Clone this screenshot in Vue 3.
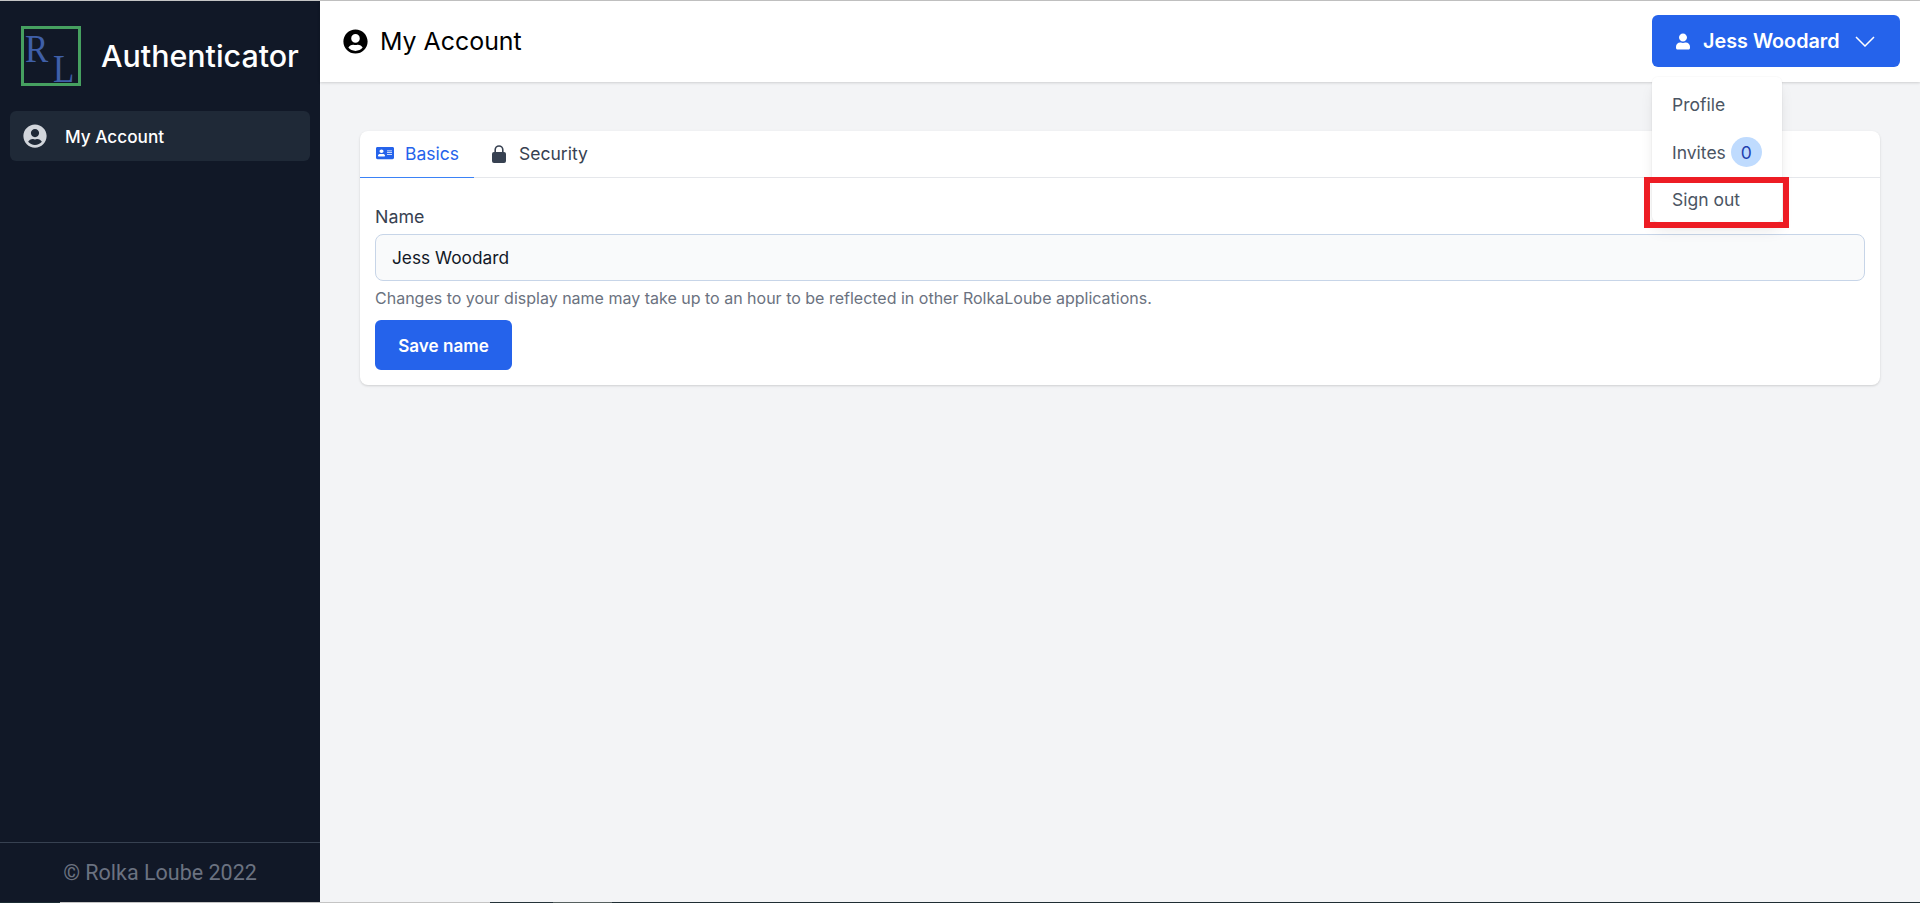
<script setup>
const helpText = 'Changes to your display name may take up to an hour to be reflected in other RolkaLoube applications.'
</script>

<template>
  <div class="page">
    <div class="shell">
      <aside class="sidebar">
        <div class="brand">
          <div class="logo">
            <span class="logo-r">R</span>
            <span class="logo-l">L</span>
          </div>
          <span class="brand-name">Authenticator</span>
        </div>
        <nav class="nav">
          <a class="nav-item">
            <svg class="nav-icon" viewBox="0 0 512 512"><path fill="currentColor" d="M256 8C119 8 8 119 8 256s111 248 248 248 248-111 248-248S393 8 256 8zm0 96c48.600 0 88 39.400 88 88s-39.400 88-88 88-88-39.400-88-88 39.400-88 88-88zm0 344c-58.700 0-111.300-26.600-146.500-68.200 18.800-35.400 55.600-59.800 98.500-59.800 2.400 0 4.800.4 7.100 1.100 13 4.200 26.600 6.900 40.900 6.900 14.300 0 28-2.700 40.900-6.900 2.300-.7 4.700-1.100 7.100-1.100 42.900 0 79.700 24.400 98.500 59.800C367.300 421.400 314.700 448 256 448z"/></svg>
            <span>My Account</span>
          </a>
        </nav>
        <div class="copyright">© Rolka Loube 2022</div>
      </aside>
      <div class="main">
        <header class="topbar">
          <div class="title">
            <svg class="title-icon" viewBox="0 0 512 512"><path fill="currentColor" d="M256 8C119 8 8 119 8 256s111 248 248 248 248-111 248-248S393 8 256 8zm0 96c48.600 0 88 39.400 88 88s-39.400 88-88 88-88-39.400-88-88 39.400-88 88-88zm0 344c-58.700 0-111.300-26.600-146.500-68.200 18.800-35.400 55.600-59.800 98.500-59.800 2.400 0 4.800.4 7.100 1.100 13 4.200 26.600 6.900 40.900 6.900 14.300 0 28-2.700 40.900-6.900 2.300-.7 4.700-1.100 7.100-1.100 42.900 0 79.700 24.400 98.500 59.800C367.300 421.400 314.700 448 256 448z"/></svg>
            <h1>My Account</h1>
          </div>
          <div class="user">
            <button class="user-btn">
              <svg class="user-icon" viewBox="0 0 448 512"><path fill="currentColor" d="M224 256c70.700 0 128-57.300 128-128S294.700 0 224 0 96 57.300 96 128s57.300 128 128 128zm89.600 32h-16.700c-22.200 10.200-46.900 16-72.900 16s-50.600-5.800-72.900-16h-16.700C60.200 288 0 348.200 0 422.400V464c0 26.500 21.500 48 48 48h352c26.500 0 48-21.500 48-48v-41.600c0-74.200-60.200-134.400-134.400-134.400z"/></svg>
              <span>Jess Woodard</span>
              <svg class="chev" viewBox="0 0 20 11"><path d="M1 1l9 9 9-9" fill="none" stroke="currentColor" stroke-width="1.500"/></svg>
            </button>
            <div class="menu">
              <a class="menu-item">Profile</a>
              <a class="menu-item invites">Invites <span class="badge">0</span></a>
              <a class="menu-item signout">Sign out</a>
              <span class="highlight"></span>
            </div>
          </div>
        </header>
        <main class="content">
          <section class="card">
            <div class="tabs">
              <a class="tab active">
                <svg class="tab-icon" viewBox="0 0 576 512" preserveAspectRatio="none"><path fill="currentColor" d="M528 32H48C21.500 32 0 53.500 0 80v352c0 26.500 21.500 48 48 48h480c26.500 0 48-21.500 48-48V80c0-26.500-21.500-48-48-48zm-352 96c35.300 0 64 28.700 64 64s-28.700 64-64 64-64-28.700-64-64 28.700-64 64-64zm112 236.800c0 10.600-10 19.200-22.400 19.200H86.400C74 384 64 375.400 64 364.800v-19.200c0-31.800 30.100-57.600 67.200-57.600h5c12.300 5.100 25.700 8 39.800 8s27.600-2.900 39.800-8h5c37.100 0 67.200 25.800 67.200 57.600v19.200zM512 312c0 4.400-3.600 8-8 8H360c-4.400 0-8-3.600-8-8v-16c0-4.400 3.600-8 8-8h144c4.400 0 8 3.600 8 8v16zm0-64c0 4.400-3.600 8-8 8H360c-4.400 0-8-3.600-8-8v-16c0-4.400 3.600-8 8-8h144c4.400 0 8 3.600 8 8v16zm0-64c0 4.400-3.600 8-8 8H360c-4.400 0-8-3.600-8-8v-16c0-4.400 3.600-8 8-8h144c4.400 0 8 3.600 8 8v16z"/></svg>
                <span>Basics</span>
              </a>
              <a class="tab second">
                <svg class="lock" viewBox="0 0 14 18"><path fill="none" stroke="currentColor" stroke-width="1.600" d="M3.200 8V4.800a3.800 3.800 0 0 1 7.600 0V8"/><rect x="0" y="7" width="14" height="11" rx="2" fill="currentColor"/></svg>
                <span>Security</span>
              </a>
            </div>
            <form class="form" @submit.prevent>
              <label class="label" for="name">Name</label>
              <input id="name" class="input" value="Jess Woodard" />
              <p class="help">{{ helpText }}</p>
              <button class="save" type="submit">Save name</button>
            </form>
          </section>
        </main>
      </div>
    </div>
    <div class="strip">
      <span class="seg s1"></span>
      <span class="seg s2"></span>
      <span class="seg s3"></span>
      <span class="seg s4"></span>
      <span class="seg s5"></span>
    </div>
  </div>
</template>

<style>
html, body { margin: 0; height: 100%; overflow: hidden; }
</style>

<style scoped>
* { box-sizing: border-box; }
.page {
  display: flex;
  flex-direction: column;
  height: 903px;
  border-top: 1px solid #c4c4c4;
  font-family: Inter, "Liberation Sans", sans-serif;
  background: #f3f4f6;
}
.shell { flex: 1; min-height: 0; display: flex; }
.strip { height: 1px; flex: none; display: flex; }
.seg { display: block; height: 1px; }
.s1 { width: 60px; background: #1b2c33; }
.s2 { width: 430px; background: #c4c4c4; }
.s3 { width: 63px; background: #243238; }
.s4 { width: 59px; background: #56605f; }
.s5 { flex: 1; background: #1f2d33; }
.sidebar {
  width: 320px;
  flex: none;
  background: #111827;
  display: flex;
  flex-direction: column;
}
.brand {
  display: flex;
  align-items: center;
  gap: 20px;
  padding: 24px 21px 0;
  height: 85px;
}
.logo {
  position: relative;
  width: 60px;
  height: 60px;
  border: 3px solid #46a060;
  flex: none;
  font-family: "Liberation Serif", serif;
  color: #3f5fa8;
  font-size: 41px;
  line-height: 1;
}
.logo-r { position: absolute; left: 1px; top: -1px; transform: scaleX(.85); transform-origin: left top; }
.logo-l { position: absolute; left: 29px; top: 19px; transform: scaleX(.85); transform-origin: left top; }
.brand-name {
  color: #fff;
  font-size: 30.400px;
  font-weight: 500;
  line-height: 36px;
}
.nav { padding: 25px 10px 0; flex: 1; }
.nav-item {
  display: flex;
  align-items: center;
  gap: 18px;
  height: 50px;
  padding: 0 13px;
  border-radius: 6px;
  background: #1f2937;
  color: #fff;
  font-size: 17.200px;
  font-weight: 500;
}
.nav-icon { width: 24px; height: 24px; color: #d1d5db; flex: none; }
.copyright {
  height: 60px;
  flex: none;
  border-top: 1px solid #374151;
  color: #6b7280;
  font-family: Roboto, sans-serif;
  font-size: 21.500px;
  display: flex;
  align-items: center;
  justify-content: center;
}
.main { flex: 1; min-width: 0; display: flex; flex-direction: column; }
.topbar {
  height: 81px;
  flex: none;
  background: #fff;
  box-shadow: 0 1px 3px rgba(0,0,0,.1), 0 1px 2px rgba(0,0,0,.06);
  display: flex;
  align-items: flex-start;
  justify-content: space-between;
  padding: 14px 20px 0 23px;
}
.title { display: flex; align-items: center; gap: 12px; height: 52px; color: #000; }
.title-icon { width: 25px; height: 25px; }
.title h1 { margin: 0; font-size: 24.900px; font-weight: 400; line-height: 32px; }
.user { position: relative; }
.user-btn {
  display: flex;
  align-items: center;
  width: 248px;
  height: 52px;
  padding: 0 24px;
  background: #2563eb;
  color: #fff;
  border: 0;
  border-radius: 6px;
  font: 600 19.800px Inter, sans-serif;
}
.user-icon { width: 14px; height: 17px; margin-right: 13px; flex: none; }
.chev { width: 20px; height: 11px; margin-left: 15px; flex: none; }
.menu {
  position: absolute;
  top: 62px;
  left: 0;
  width: 130px;
  padding-top: 3px;
  background: #fff;
  border-radius: 6px;
  box-shadow: 0 0 0 1px rgba(0,0,0,.02), 0 10px 15px -3px rgba(0,0,0,.1), 0 4px 6px -2px rgba(0,0,0,.05);
  z-index: 5;
  font-size: 17.500px;
  color: #4b5563;
}
.menu-item { display: flex; align-items: center; height: 48px; padding: 0 20px; }
.invites { gap: 5px; }
.signout { height: 46px; }
.badge {
  width: 31px;
  height: 30px;
  flex: none;
  border-radius: 50%;
  background: #bfdbfe;
  color: #1e40af;
  display: flex;
  align-items: center;
  justify-content: center;
}
.highlight {
  position: absolute;
  left: -8px;
  top: 100px;
  width: 145px;
  height: 51px;
  border: 6px solid #ed1c24;
}
.content { flex: 1; padding: 49px 40px 0; }
.card {
  background: #fff;
  border-radius: 8px;
  box-shadow: 0 1px 3px rgba(0,0,0,.1), 0 1px 2px rgba(0,0,0,.06);
}
.tabs { display: flex; height: 47px; border-bottom: 1px solid #e5e7eb; }
.tab {
  display: flex;
  align-items: center;
  gap: 12px;
  padding: 0 15px 2px;
  height: 47px;
  margin-bottom: -1px;
  color: #374151;
  font-size: 17.500px;
}
.tab.active { color: #2563eb; gap: 11px; border-bottom: 1px solid #3b82f6; width: 114px; padding: 0 0 2px 16px; }
.tab.second { padding-left: 18px; gap: 13px; }
.tab-icon { width: 18px; height: 14px; flex: none; }
.lock { width: 14px; height: 18px; flex: none; }
.form { padding: 27px 15px 15px; }
.label { display: block; font-size: 17.800px; line-height: 24px; color: #374151; margin-bottom: 5px; }
.input {
  display: block;
  width: 100%;
  height: 47px;
  padding: 0 16px;
  background: #f9fafb;
  border: 1px solid #c7d5e8;
  border-radius: 8px;
  font: 400 17.300px Inter, sans-serif;
  color: #111827;
}
.help { margin: 7px 0 0; font-size: 16px; line-height: 20px; color: #6b7280; }
.save {
  display: block;
  margin-top: 12px;
  width: 137px;
  height: 50px;
  background: #2563eb;
  color: #fff;
  border: 0;
  border-radius: 6px;
  font: 600 17.100px Inter, sans-serif;
}
</style>
